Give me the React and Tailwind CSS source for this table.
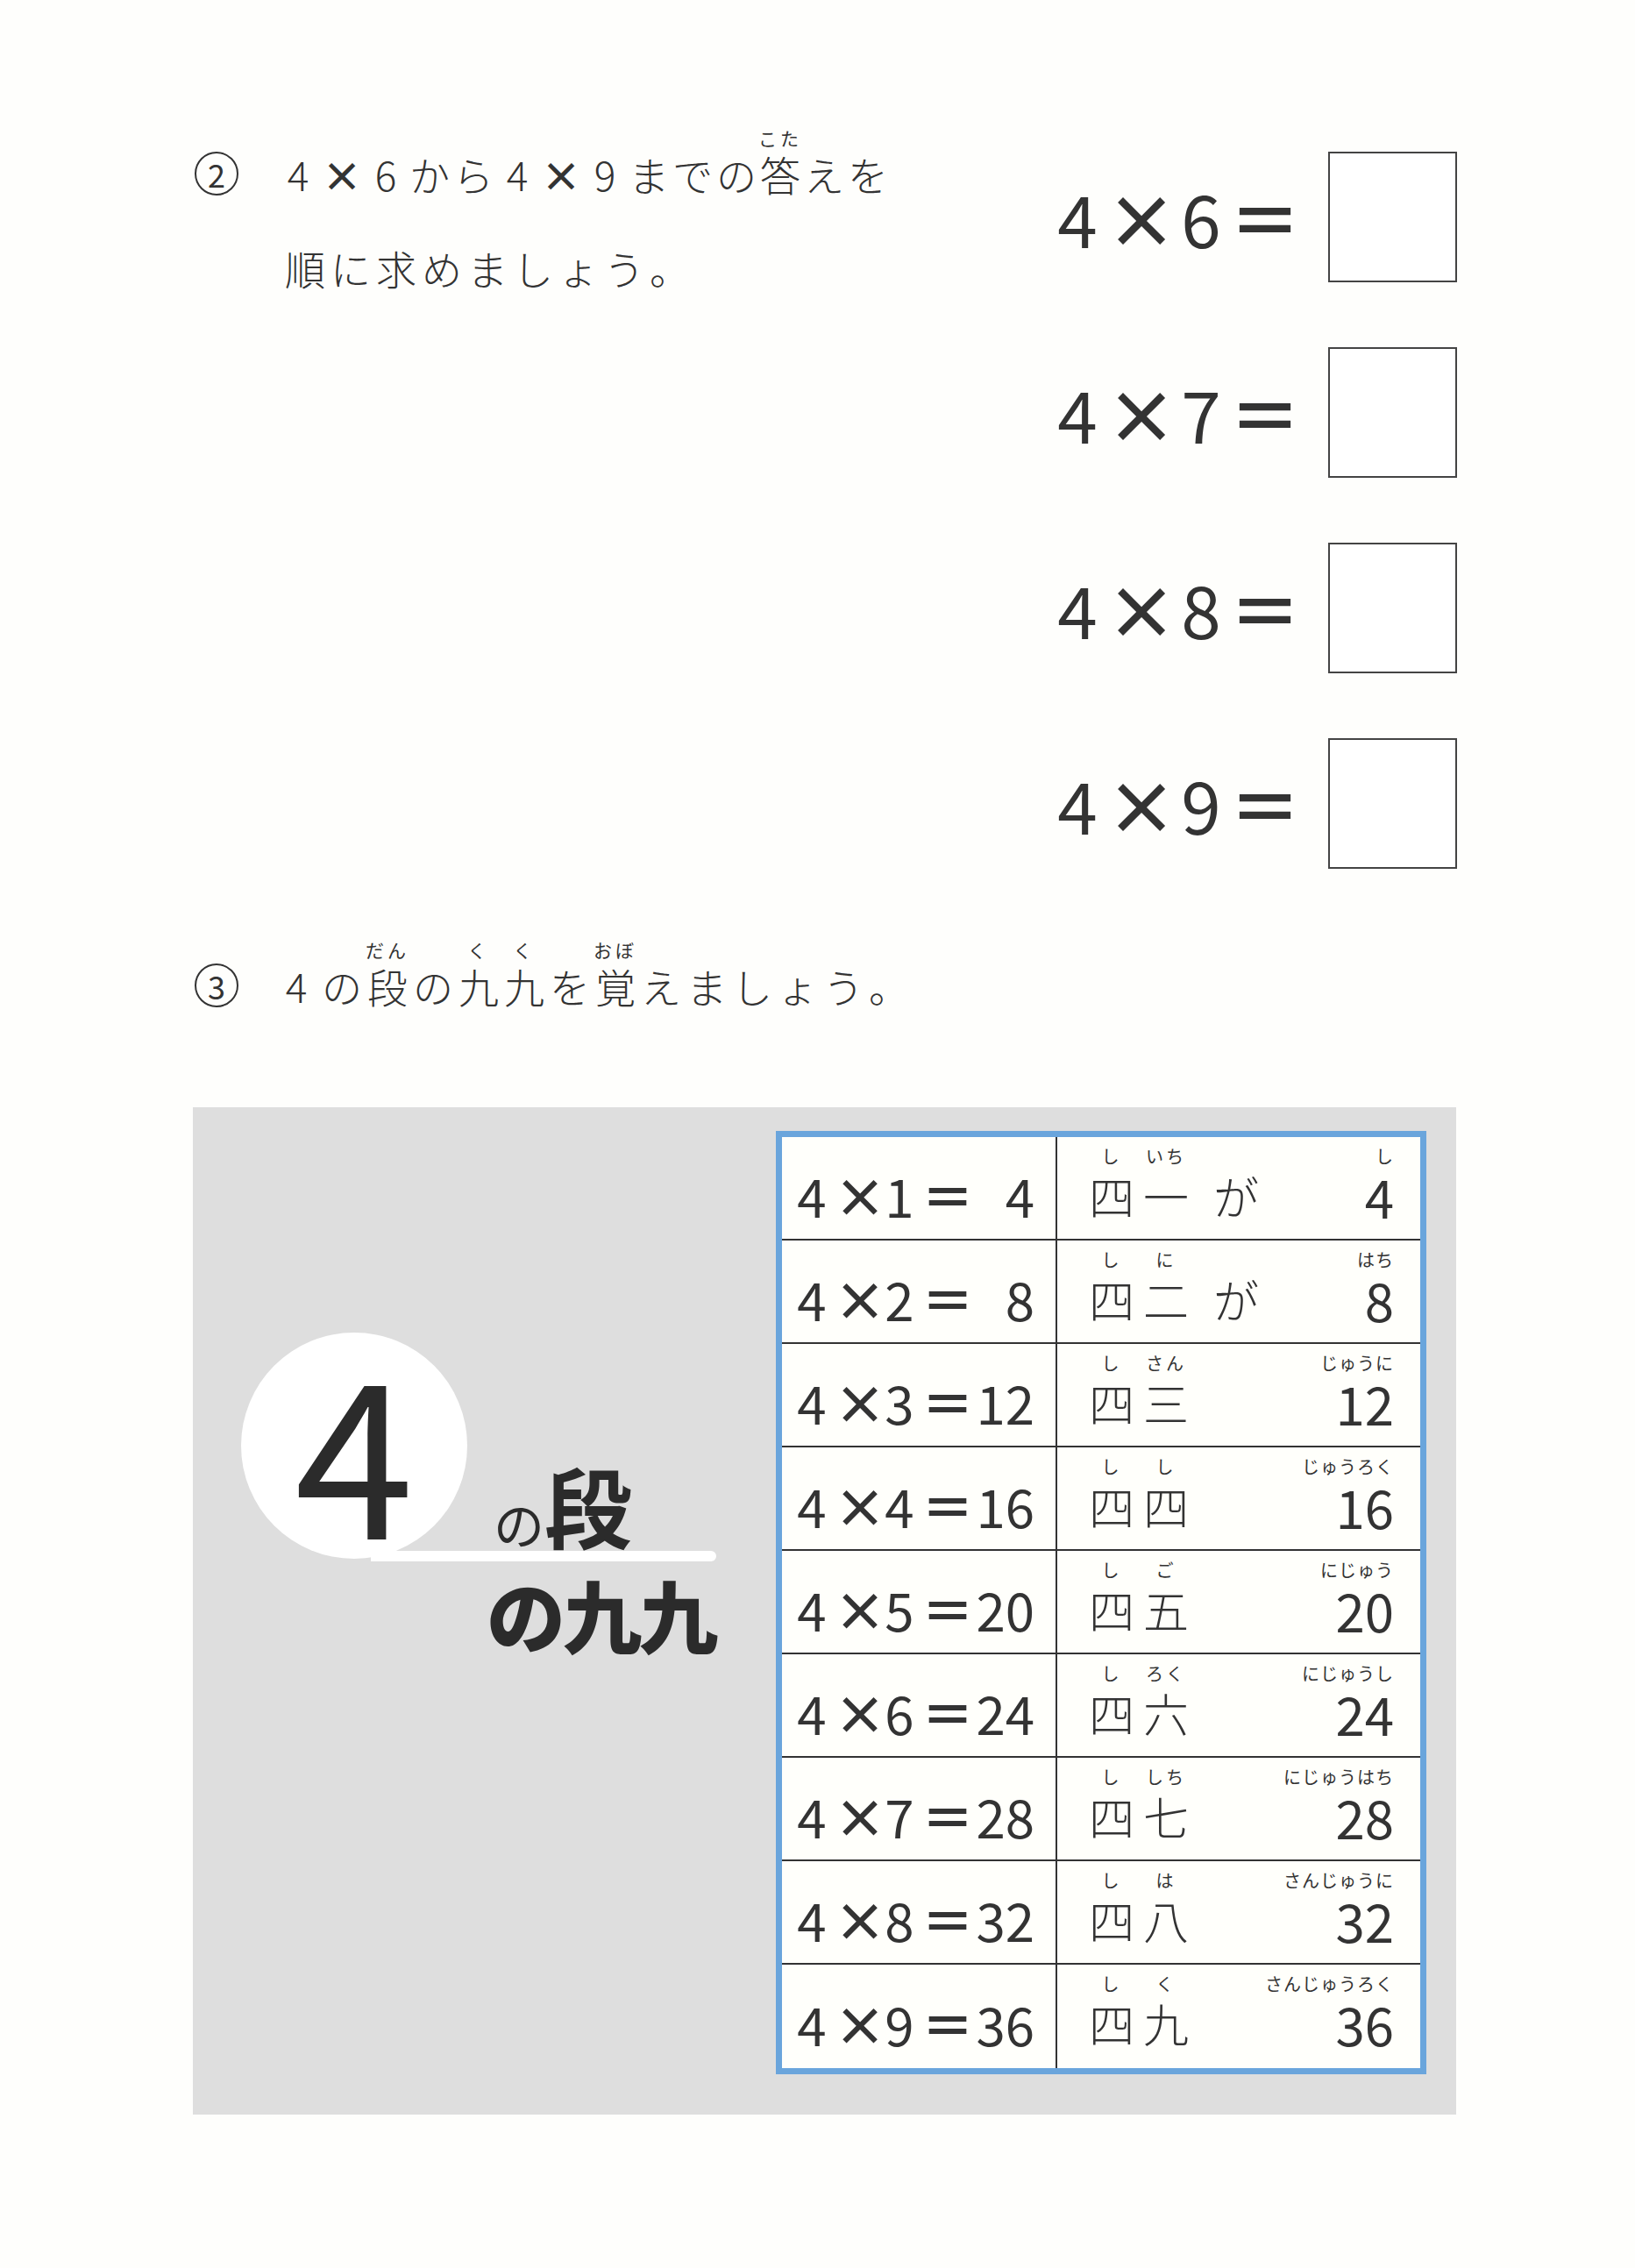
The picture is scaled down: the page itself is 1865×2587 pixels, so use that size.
import React from 'react'

const Cell = ({ ch, ruby, w, bold }) => (
  <span className={`relative flex justify-center ${w} ${bold ? 'font-bold' : ''}`}>
    {ch}
    {ruby && (
      <span className="absolute bottom-full left-1/2 -translate-x-1/2 mb-[7px] whitespace-nowrap text-[21px] leading-none tracking-[4px] font-normal">
        {ruby}
      </span>
    )}
  </span>
)

const Line = ({ chars, w, className = '' }) => (
  <div className={`flex text-[46px] leading-none font-light ${className}`}>
    {chars.map((c, i) => (
      <Cell key={i} ch={c[0]} ruby={c[1]} w={w} bold={c[0] === '×'} />
    ))}
  </div>
)

const Circled = ({ n }) => (
  <div className="flex items-center justify-center w-[50px] h-[50px] shrink-0 rounded-full border-2 border-[#333] text-[36px] leading-none">
    {n}
  </div>
)

const Eq = ({ n }) => (
  <div className="flex items-center h-[149px]">
    <div className="flex items-center text-[82px] leading-none">
      <span className="flex justify-center w-[70px]">4</span>
      <span className="flex justify-center w-[76px] font-bold">×</span>
      <span className="flex justify-center w-[60px]">{n}</span>
      <span className="flex justify-center w-[86px] font-bold">＝</span>
    </div>
    <div className="ml-[29px] w-[147px] h-[149px] border-2 border-[#444] bg-white" />
  </div>
)

const line1 = [['4'], ['×'], ['6'], ['か'], ['ら'], ['4'], ['×'], ['9'], ['ま'], ['で'], ['の'], ['答', 'こた'], ['え'], ['を']]
const line2 = [...'順に求めましょう。'].map((c) => [c])
const line3 = [['4'], ['の'], ['段', 'だん'], ['の'], ['九', 'く'], ['九', 'く'], ['を'], ['覚', 'おぼ'], ['え'], ['ま'], ['し'], ['ょ'], ['う'], ['。']]

const rows = [
  { n: '1', res: '4', k: '一', r: 'いち', ga: true, rr: 'し' },
  { n: '2', res: '8', k: '二', r: 'に', ga: true, rr: 'はち' },
  { n: '3', res: '12', k: '三', r: 'さん', rr: 'じゅうに' },
  { n: '4', res: '16', k: '四', r: 'し', rr: 'じゅうろく' },
  { n: '5', res: '20', k: '五', r: 'ご', rr: 'にじゅう' },
  { n: '6', res: '24', k: '六', r: 'ろく', rr: 'にじゅうし' },
  { n: '7', res: '28', k: '七', r: 'しち', rr: 'にじゅうはち' },
  { n: '8', res: '32', k: '八', r: 'は', rr: 'さんじゅうに' },
  { n: '9', res: '36', k: '九', r: 'く', rr: 'さんじゅうろく' },
]

const Row = ({ row }) => (
  <div className="flex h-[118px] bg-[#fffffb]">
    <div className="flex items-center w-[314px] shrink-0 border-r-2 border-[#333] pt-[16px] pl-[9px] text-[60px] leading-none">
      <span className="flex justify-center w-[50px]">4</span>
      <span className="flex justify-center w-[60px] font-bold">×</span>
      <span className="flex justify-center w-[30px]">{row.n}</span>
      <span className="flex justify-center w-[80px] font-bold">＝</span>
      <span className="flex justify-end w-[59px]">{row.res}</span>
    </div>
    <div className="flex flex-1 justify-between pt-[12px] pl-[37px] pr-[30px]">
      <div className="flex flex-col">
        <div className="flex h-[20px] text-[20px] leading-none tracking-[3px]">
          <span className="flex justify-center w-[50px]">し</span>
          <span className="flex justify-center w-[74px]">{row.r}</span>
        </div>
        <div className="flex items-center h-[52px] mt-[9px] text-[52px] leading-none font-light">
          <span className="flex justify-center w-[50px]">四</span>
          <span className="flex justify-center w-[74px]">{row.k}</span>
          {row.ga && <span className="flex justify-center w-[60px] ml-[13px]">が</span>}
        </div>
      </div>
      <div className="flex flex-col items-end">
        <div className="h-[20px] text-[20px] leading-none tracking-[1px]">{row.rr}</div>
        <div className="flex items-center h-[52px] mt-[9px] text-[60px] leading-none">{row.res}</div>
      </div>
    </div>
  </div>
)

export default function App() {
  return (
    <div className="w-[1865px] h-[2587px] bg-[#fefefc] text-[#333] font-['Noto_Sans_CJK_JP',sans-serif]">
      <div className="flex pt-[173px]">
        <div className="flex-1 pl-[222px]">
          <div className="flex items-center">
            <Circled n="2" />
            <Line chars={line1} w="w-[50px]" className="ml-[43px]" />
          </div>
          <Line chars={line2} w="w-[52px]" className="mt-[59px] ml-[100px]" />
        </div>
        <div className="flex flex-col gap-[74px] pr-[203px]">
          <Eq n="6" />
          <Eq n="7" />
          <Eq n="8" />
          <Eq n="9" />
        </div>
      </div>

      <div className="flex items-center mt-[108px] pl-[222px]">
        <Circled n="3" />
        <Line chars={line3} w="w-[52px]" className="ml-[40px]" />
      </div>

      <div className="flex mt-[114px] ml-[220px] w-[1441px] h-[1149px] bg-[#dedede]">
        <div className="w-[665px] shrink-0 pl-[55px] pt-[257px] text-[#2b2b2b]">
          <div className="flex items-end">
            <div className="flex items-center justify-center w-[258px] h-[258px] shrink-0 rounded-full bg-white text-[245px] leading-none font-normal">
              4
            </div>
            <div className="flex items-end ml-[30px] mb-[12px]">
              <span className="text-[58px] leading-none font-normal">の</span>
              <span className="text-[100px] leading-none font-bold">段</span>
            </div>
          </div>
          <div className="ml-[148px] -mt-[9px] w-[394px] h-[12px] bg-white rounded-r-full" />
          <div className="ml-[280px] mt-[14px] text-[90px] leading-none font-black tracking-[-3px]">の九九</div>
        </div>
        <div className="w-[742px] self-start mt-[27px] border-[7px] border-[#6aa5dc] divide-y-2 divide-[#333]">
          {rows.map((r) => (
            <Row key={r.n} row={r} />
          ))}
        </div>
      </div>
    </div>
  )
}
